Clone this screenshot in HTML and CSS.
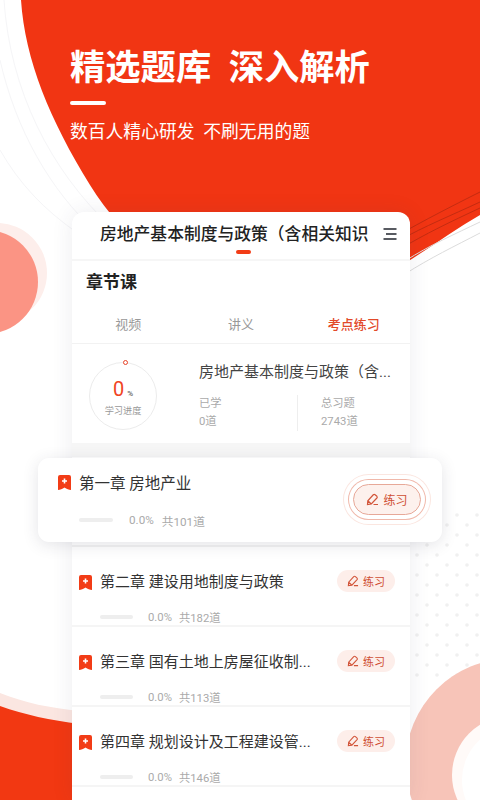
FILE: index.html
```html
<!DOCTYPE html>
<html lang="zh-CN">
<head>
    <meta charset="UTF-8">
    <meta name="viewport" content="width=device-width, initial-scale=1.0">
    <title>精选题库 深入解析</title>
    <link rel="stylesheet" href="styles.css">
</head>
<body>
    <div class="page">
        <svg class="backdrop" width="480" height="800" viewBox="0 0 480 800" aria-hidden="true">
            <defs>
                <pattern id="dots" width="20" height="20" patternUnits="userSpaceOnUse" x="412" y="510">
                    <circle cx="5" cy="5" r="1.8" fill="#f0f0f0"/>
                    <circle cx="15" cy="15" r="1.8" fill="#f0f0f0"/>
                </pattern>
            </defs>
            <!-- faint lines left of the red shape -->
            <g fill="none" stroke="#f5f5f7" stroke-width="1">
                <path d="M4 0C10 90 50 170 112 228"/>
                <path d="M0 60C16 130 50 190 96 232"/>
                <path d="M0 150C20 185 45 210 76 232"/>
            </g>
            <!-- red top shape -->
            <path d="M21 0C25 60 50 120 90 185C130 250 200 300 290 305C360 305 420 250 480 215V0Z" fill="#f13513"/>
            <g fill="none" stroke="#b92a10" stroke-width="0.8">
                <path d="M400 234C425 220 450 207 480 192"/>
                <path d="M400 240C425 226 450 216 480 202"/>
                <path d="M400 249C425 234 450 222 480 208"/>
            </g>
            <g fill="none" stroke="#dcdcdc" stroke-width="1">
                <path d="M405 261C430 245 455 234 480 222"/>
                <path d="M405 274C430 258 455 246 480 233"/>
            </g>
            <!-- left circle -->
            <circle cx="-3" cy="273" r="50" fill="#fdeeeb"/>
            <circle cx="-14" cy="282" r="52" fill="#fb9484"/>
            <!-- lower left band -->
            <path d="M0 693C25 703 50 708 80 711V800H0Z" fill="#fbe6e1"/>
            <path d="M0 706C25 715 50 720 80 724V800H0Z" fill="#f23812"/>
            <!-- dots and ring on the right -->
            <rect x="410" y="510" width="70" height="170" fill="url(#dots)"/>
            <circle cx="511" cy="764" r="105.500" fill="#f7c4b8"/>
            <circle cx="511" cy="775" r="59" fill="#fffaf8"/>
            <circle cx="516" cy="780" r="54" fill="#ffffff"/>
        </svg>

        <header class="hero">
            <h1 class="hero-title">精选题库&nbsp;&nbsp;深入解析</h1>
            <div class="hero-rule"></div>
            <p class="hero-sub">数百人精心研发&nbsp;&nbsp;不刷无用的题</p>
        </header>

        <main class="card">
            <div class="topbar">
                <div class="topbar-title">房地产基本制度与政策（含相关知识</div>
                <svg class="menu-icon" width="14" height="12" viewBox="0 0 14 12">
                    <path d="M0.5 1H13.5M3 6H13.5M0.5 11H13.5" stroke="#22262e" stroke-width="1.5" fill="none"/>
                </svg>
                <span class="topbar-mark"></span>
            </div>

            <h2 class="section-title">章节课</h2>

            <div class="tabs">
                <span class="tab">视频</span>
                <span class="tab">讲义</span>
                <span class="tab tab-active">考点练习</span>
            </div>

            <section class="stats">
                <div class="ring">
                    <span class="ring-dot"></span>
                    <div class="ring-value"><b>0</b><i>%</i></div>
                    <div class="ring-label">学习进度</div>
                </div>
                <div class="stats-main">
                    <div class="stats-title">房地产基本制度与政策（含...</div>
                    <div class="stats-cols">
                        <div class="stat">
                            <span>已学</span>
                            <span>0道</span>
                        </div>
                        <div class="stat stat-total">
                            <span>总习题</span>
                            <span>2743道</span>
                        </div>
                    </div>
                </div>
            </section>

            <div class="band"></div>

            <div class="lead-wrap">
                <article class="lead">
                    <div class="lead-title">
                        <svg class="mark" width="13" height="15" viewBox="0 0 13 15"><path d="M2 0H11Q13 0 13 2V15C11 15 8.500 14.300 6.500 12.600C4.500 14.300 2 15 0 15V2Q0 0 2 0Z" fill="#f23c16"/><path d="M6.500 3.500V8.500M4 6H9" stroke="#fff" stroke-width="1.600"/></svg>
                        <span>第一章 房地产业</span>
                    </div>
                    <div class="lead-meta">
                        <span class="bar"></span>
                        <span class="pct">0.0%</span>
                        <span>共101道</span>
                    </div>
                    <a class="practice practice-big">
                        <svg class="pen" width="13" height="13" viewBox="0 0 13 13"><path d="M1.500 11.500L1.800 7.800L7.300 1.800Q8.200 1 9.100 1.700L10.900 3.300Q11.700 4.100 10.900 5L5.300 11ZM1.800 7.800L5.300 11M7.500 11.500H12" fill="none" stroke="#d2553a" stroke-width="1.200"/></svg>
                        练习
                    </a>
                </article>
            </div>

            <article class="row">
                <svg class="mark" width="13" height="15" viewBox="0 0 13 15"><path d="M2 0H11Q13 0 13 2V15C11 15 8.500 14.300 6.500 12.600C4.500 14.300 2 15 0 15V2Q0 0 2 0Z" fill="#f23c16"/><path d="M6.500 3.500V8.500M4 6H9" stroke="#fff" stroke-width="1.600"/></svg>
                <div class="row-title">第二章 建设用地制度与政策</div>
                <a class="practice">
                    <svg class="pen" width="12" height="12" viewBox="0 0 13 13"><path d="M1.500 11.500L1.800 7.800L7.300 1.800Q8.200 1 9.100 1.700L10.900 3.300Q11.700 4.100 10.900 5L5.300 11ZM1.800 7.800L5.300 11M7.500 11.500H12" fill="none" stroke="#d2553a" stroke-width="1.200"/></svg>
                    练习
                </a>
                <div class="row-meta">
                    <span class="bar"></span>
                    <span class="pct">0.0%</span>
                    <span>共182道</span>
                </div>
            </article>

            <article class="row">
                <svg class="mark" width="13" height="15" viewBox="0 0 13 15"><path d="M2 0H11Q13 0 13 2V15C11 15 8.500 14.300 6.500 12.600C4.500 14.300 2 15 0 15V2Q0 0 2 0Z" fill="#f23c16"/><path d="M6.500 3.500V8.500M4 6H9" stroke="#fff" stroke-width="1.600"/></svg>
                <div class="row-title">第三章 国有土地上房屋征收制...</div>
                <a class="practice">
                    <svg class="pen" width="12" height="12" viewBox="0 0 13 13"><path d="M1.500 11.500L1.800 7.800L7.300 1.800Q8.200 1 9.100 1.700L10.900 3.300Q11.700 4.100 10.900 5L5.300 11ZM1.800 7.800L5.300 11M7.500 11.500H12" fill="none" stroke="#d2553a" stroke-width="1.200"/></svg>
                    练习
                </a>
                <div class="row-meta">
                    <span class="bar"></span>
                    <span class="pct">0.0%</span>
                    <span>共113道</span>
                </div>
            </article>

            <article class="row">
                <svg class="mark" width="13" height="15" viewBox="0 0 13 15"><path d="M2 0H11Q13 0 13 2V15C11 15 8.500 14.300 6.500 12.600C4.500 14.300 2 15 0 15V2Q0 0 2 0Z" fill="#f23c16"/><path d="M6.500 3.500V8.500M4 6H9" stroke="#fff" stroke-width="1.600"/></svg>
                <div class="row-title">第四章 规划设计及工程建设管...</div>
                <a class="practice">
                    <svg class="pen" width="12" height="12" viewBox="0 0 13 13"><path d="M1.500 11.500L1.800 7.800L7.300 1.800Q8.200 1 9.100 1.700L10.900 3.300Q11.700 4.100 10.900 5L5.300 11ZM1.800 7.800L5.300 11M7.500 11.500H12" fill="none" stroke="#d2553a" stroke-width="1.200"/></svg>
                    练习
                </a>
                <div class="row-meta">
                    <span class="bar"></span>
                    <span class="pct">0.0%</span>
                    <span>共146道</span>
                </div>
            </article>
        </main>
    </div>
</body>
</html>
```

FILE: styles.css
```css
* {
    box-sizing: border-box;
}
html, body {
    margin: 0;
    padding: 0;
}
body {
    background: #fff;
    color: #333;
    font-family: Roboto, "Noto Sans CJK SC", sans-serif;
}
.page {
    position: relative;
    width: 480px;
    height: 800px;
    overflow: hidden;
    display: flex;
    flex-direction: column;
}
.backdrop {
    position: absolute;
    left: 0;
    top: 0;
}
/* 顶部标题 */
.hero {
    position: relative;
    height: 212px;
    padding: 45px 0 0 70px;
    color: #fff;
}
.hero-title {
    margin: 0;
    font-size: 35.3px;
    line-height: 46px;
    font-weight: 700;
    white-space: nowrap;
}
.hero-rule {
    width: 36px;
    height: 4px;
    margin-top: 10px;
    background: #fff;
    border-radius: 2px;
}
.hero-sub {
    margin: 14px 0 0;
    font-size: 17.8px;
    line-height: 26px;
    white-space: nowrap;
}
/* 主卡片 */
.card {
    position: relative;
    flex: 1;
    width: 338px;
    margin-left: 72px;
    background: #fff;
    border-radius: 12px 12px 0 0;
    box-shadow: 0 0 22px rgba(50, 50, 90, 0.09);
}
.topbar {
    position: relative;
    height: 49px;
    display: flex;
    align-items: center;
    padding: 0 14px 0 28px;
    border-bottom: 2px solid #f6f6f6;
}
.topbar-title {
    flex: none;
    width: 268px;
    margin-bottom: 3px;
    white-space: nowrap;
    font-size: 16.8px;
    line-height: 24px;
    font-weight: 500;
    color: #222;
}
.menu-icon {
    flex: none;
    margin: 0 0 3px 15px;
}
.topbar-mark {
    position: absolute;
    left: 164px;
    bottom: 5px;
    width: 15px;
    height: 4px;
    border-radius: 2px;
    background: #f23c16;
}
.section-title {
    margin: 9px 0 0 14px;
    font-size: 17px;
    line-height: 24px;
    font-weight: 700;
    color: #222;
}
.tabs {
    display: grid;
    grid-template-columns: repeat(3, 1fr);
    height: 32px;
    margin-top: 18px;
    border-bottom: 1px solid #f2f2f2;
    text-align: center;
}
.tab {
    font-size: 13px;
    line-height: 26px;
    color: #999;
}
.tab-active {
    color: #e2492a;
    font-weight: 500;
}
.stats {
    height: 99px;
    display: flex;
    padding: 0 0 0 17px;
}
.ring {
    position: relative;
    width: 68px;
    height: 68px;
    margin-top: 18px;
    border: 1px solid #ececec;
    border-radius: 50%;
    text-align: center;
}
.ring-dot {
    position: absolute;
    left: 33px;
    top: -3px;
    width: 5px;
    height: 5px;
    border: 1.500px solid #e8452a;
    border-radius: 50%;
    background: #fff;
}
.ring-value {
    margin-top: 14px;
    line-height: 24px;
    color: #f0441f;
}
.ring-value b {
    font-size: 20px;
    font-weight: 400;
}
.ring-value i {
    margin-left: 3px;
    font-style: normal;
    font-size: 8px;
    font-weight: 700;
    color: #777;
}
.ring-label {
    font-size: 9.200px;
    line-height: 12px;
    margin-top: -1px;
    color: #999;
}
.stats-main {
    width: 192px;
    margin-left: 42px;
}
.stats-title {
    margin-top: 17px;
    font-size: 15px;
    line-height: 22px;
    color: #444;
    white-space: nowrap;
}
.stats-cols {
    display: flex;
    margin-top: 12px;
}
.stat {
    display: flex;
    flex-direction: column;
    width: 98px;
    font-size: 11.3px;
    line-height: 18px;
    color: #aaa;
}
.stat:first-child {
    flex: none;
    width: 98px;
}
.stat-total {
    flex: none;
    width: 92px;
    padding-left: 23px;
    border-left: 1px solid #eee;
}
.band {
    height: 14px;
    background: #f6f6f6;
}
.lead-wrap {
    height: 90px;
    padding-top: 1px;
    border-bottom: 2px solid #f3f3f3;
}
.lead {
    position: relative;
    z-index: 2;
    width: 404px;
    height: 84px;
    margin-left: -34px;
    padding: 13px 0 0 20px;
    background: #fff;
    border-radius: 11px;
    box-shadow: 0 3px 16px rgba(50, 50, 70, 0.13);
}
.lead-title {
    display: flex;
    align-items: center;
    height: 22px;
    font-size: 15.5px;
    color: #333;
}
.lead-title .mark {
    margin-right: 8px;
}
.lead-meta {
    display: flex;
    align-items: center;
    height: 18px;
    margin: 18px 0 0 21px;
    font-size: 11.7px;
    color: #aaa;
}
.lead-meta .bar {
    width: 34px;
    margin-right: 16px;
}
.lead-meta .pct {
    margin-right: 8px;
}
.bar {
    display: block;
    width: 33px;
    height: 4px;
    border-radius: 2px;
    background: #eeeeee;
}
.pct {
    margin-right: 7px;
}
.row {
    display: grid;
    grid-template-columns: 13px 1fr 58px;
    grid-template-rows: 22px 18px;
    column-gap: 8px;
    row-gap: 15px;
    align-items: center;
    align-content: start;
    height: 80px;
    padding: 24px 15px 0 7px;
    border-bottom: 2px solid #f5f5f5;
}
.row-title {
    font-size: 15px;
    line-height: 22px;
    color: #333;
    white-space: nowrap;
}
.row-meta {
    grid-column: 2 / 4;
    display: flex;
    align-items: center;
    font-size: 11.3px;
    color: #aaa;
}
.row-meta .bar {
    margin-right: 15px;
}
.practice {
    display: flex;
    align-items: center;
    justify-content: center;
    gap: 4px;
    height: 22px;
    margin-top: -2px;
    border-radius: 11px;
    background: #fdeeea;
    font-size: 11px;
    color: #cf4f33;
}
.practice-big {
    position: absolute;
    left: 315px;
    top: 26px;
    width: 68px;
    height: 31px;
    margin-top: 0;
    font-size: 12px;
    border: 1px solid #e7a898;
    border-radius: 16px;
    background: #fdf1ed;
    box-shadow: 0 0 0 4px #fff, 0 0 0 5px #f0b8aa, 0 0 0 9px #fff, 0 0 0 10px #fbe6e0;
}
```
